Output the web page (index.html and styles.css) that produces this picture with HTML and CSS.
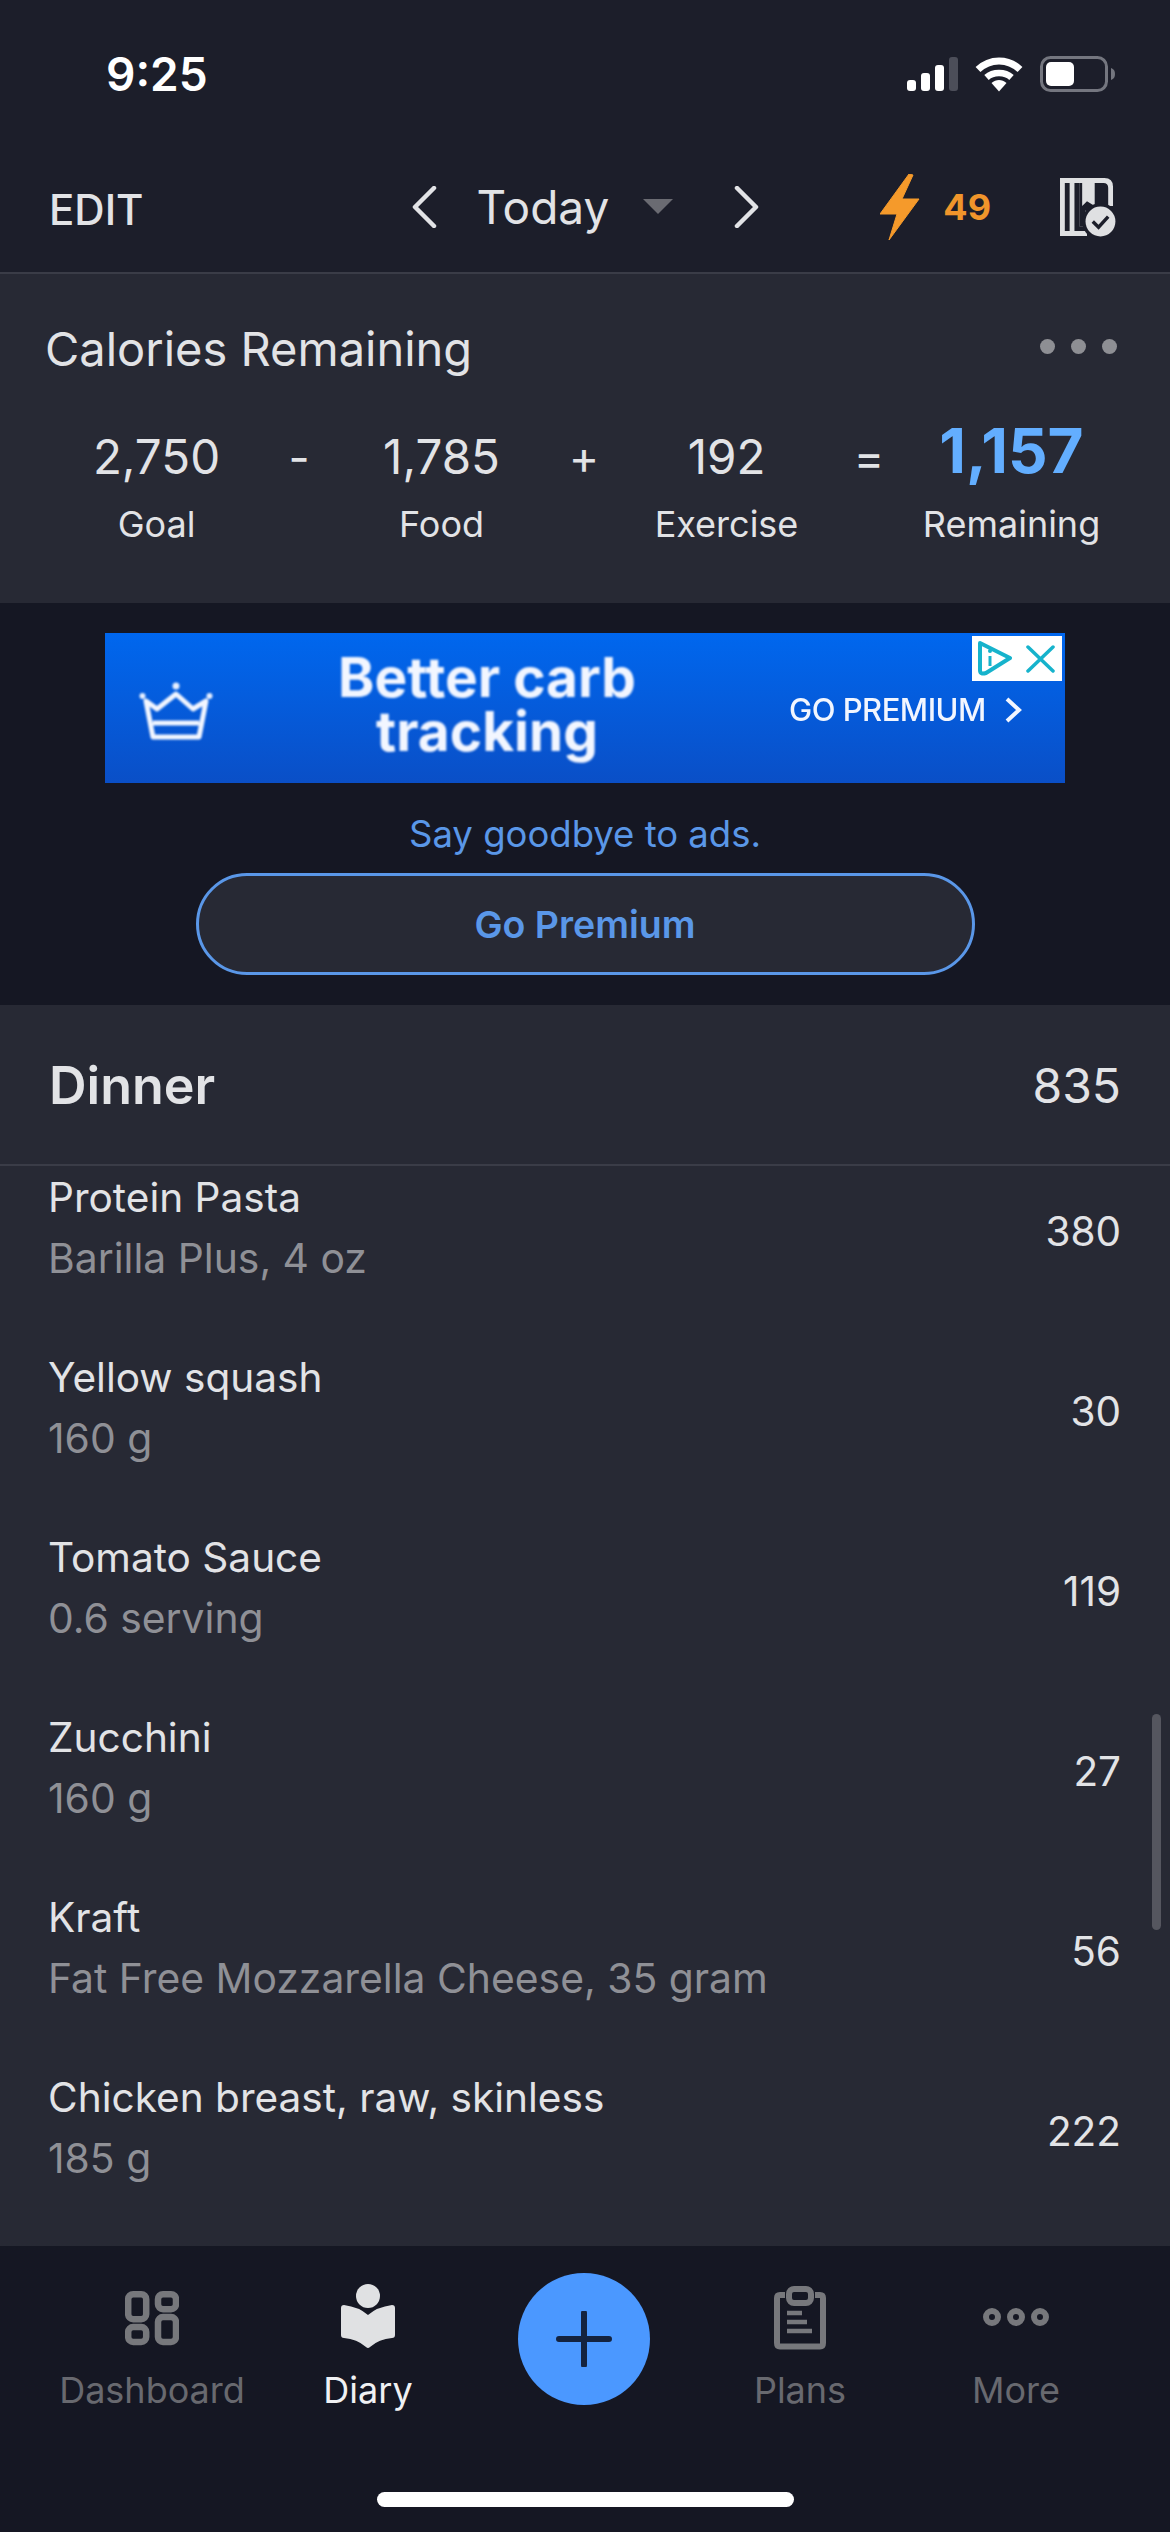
FILE: index.html
```html
<!DOCTYPE html>
<html lang="en">
<head>
<meta charset="utf-8">
<title>Diary</title>
<link rel="stylesheet" href="styles.css">
</head>
<body>
<div class="phone">
  <header class="top">
    <div class="status">
      <span class="time">9:25</span>
      <div class="status-icons">
        <svg class="ic-signal" width="51" height="34" viewBox="0 0 51 34"><rect x="0" y="23" width="9" height="11" rx="3" fill="#fff"/><rect x="14" y="16" width="9" height="18" rx="3" fill="#fff"/><rect x="28" y="8" width="9" height="26" rx="3" fill="#fff"/><rect x="42" y="0" width="9" height="34" rx="3" fill="#4c4e59"/></svg>
        <svg class="ic-wifi" width="48" height="36" viewBox="0 0 48 36"><path d="M3 13.5C15 2 33 2 45 13.5" fill="none" stroke="#fff" stroke-width="7"/><path d="M11.5 21.5C18 15.5 30 15.5 36.5 21.5" fill="none" stroke="#fff" stroke-width="6.500"/><path d="M16.500 27C21 23 27 23 31.500 27L24 35.500Z" fill="#fff"/></svg>
        <svg class="ic-batt" width="76" height="36" viewBox="0 0 76 36"><rect x="1.500" y="1.500" width="65" height="33" rx="9" fill="none" stroke="#74767f" stroke-width="3"/><rect x="6" y="6" width="28" height="24" rx="5" fill="#fff"/><path d="M71 12C74 13 75 15 75 18C75 21 74 23 71 24Z" fill="#74767f"/></svg>
      </div>
    </div>
    <nav class="nav">
      <span class="edit">EDIT</span>
      <div class="date-switch">
        <svg class="chev" width="26" height="42" viewBox="0 0 26 42"><path d="M23 2L4 21L23 40" fill="none" stroke="#e2e3e6" stroke-width="4.500" stroke-linecap="round" stroke-linejoin="round"/></svg>
        <span class="today">Today</span>
        <span class="tri"></span>
        <svg class="chev" width="26" height="42" viewBox="0 0 26 42"><path d="M3 2L22 21L3 40" fill="none" stroke="#e2e3e6" stroke-width="4.500" stroke-linecap="round" stroke-linejoin="round"/></svg>
      </div>
      <div class="streak">
        <svg width="42" height="66" viewBox="0 0 42 66"><path d="M29 0L0 40H17L9 66L39 25H22L33 1Z" fill="#f59a2b" stroke="#f59a2b" stroke-width="1" stroke-linejoin="round"/></svg>
        <span class="streak-n">49</span>
      </div>
      <svg class="book-check" width="58" height="60" viewBox="0 0 58 60"><path d="M0 0H46Q55 0 55 9V29H0Z M0 29H28V60H0Z" fill="#dfe0e2"/><path d="M5 5H10V55H5Z M15 5H20V50H26V55H15Z" fill="#1c1e2a"/><path d="M22 5H23V29L28 24L36 29V5H45Q50 5 50 10V34H26V50H20V5Z" fill="#1c1e2a"/><circle cx="42" cy="45" r="19" fill="#1c1e2a"/><circle cx="42" cy="45" r="15.500" fill="#dfe0e2"/><path d="M34 45L40 51L50 40" fill="none" stroke="#1c1e2a" stroke-width="3.500"/></svg>
    </nav>
  </header>

  <section class="summary">
    <div class="summary-head">
      <h2 class="summary-title">Calories Remaining</h2>
      <div class="dots"><i></i><i></i><i></i></div>
    </div>
    <div class="stats">
      <div class="stat"><span class="val">2,750</span><span class="lab">Goal</span></div>
      <span class="op">-</span>
      <div class="stat"><span class="val">1,785</span><span class="lab">Food</span></div>
      <span class="op">+</span>
      <div class="stat"><span class="val">192</span><span class="lab">Exercise</span></div>
      <span class="op">=</span>
      <div class="stat"><span class="val val-rem">1,157</span><span class="lab">Remaining</span></div>
    </div>
  </section>

  <section class="promo">
    <div class="ad">
      <svg class="crown" width="74" height="58" viewBox="0 0 74 58"><circle cx="37" cy="4" r="3.500" fill="#e8f0ff"/><circle cx="3.500" cy="14" r="3" fill="#e8f0ff"/><circle cx="70.500" cy="14" r="3" fill="#e8f0ff"/><path d="M7 19L18 27L37 12L54 27L67 19L60 55H14Z" fill="none" stroke="#f2f6ff" stroke-width="5" stroke-linejoin="round"/><path d="M14 41H60" stroke="#f2f6ff" stroke-width="5"/></svg>
      <div class="ad-head">Better carb<br>tracking</div>
      <div class="ad-cta"><span>GO PREMIUM</span><svg width="18" height="26" viewBox="0 0 18 26"><path d="M3 2L15 13L3 24" fill="none" stroke="#f2f6ff" stroke-width="4"/></svg></div>
      <div class="ad-badge">
        <svg width="36" height="35" viewBox="0 0 36 35"><path d="M3 2L33 17L9 32Q3 34 3 29Z" fill="none" stroke="#16b3cc" stroke-width="4" stroke-linejoin="round"/><path d="M13 15V25" stroke="#16b3cc" stroke-width="3"/><circle cx="13" cy="10" r="2" fill="#16b3cc"/></svg>
        <svg width="29" height="28" viewBox="0 0 29 28"><path d="M2 2L27 26M27 2L2 26" fill="none" stroke="#16b3cc" stroke-width="3.500" stroke-linecap="round"/></svg>
      </div>
    </div>
    <p class="goodbye">Say goodbye to ads.</p>
    <button class="premium">Go Premium</button>
  </section>

  <section class="meal">
    <div class="meal-head"><h2 class="meal-name">Dinner</h2><span class="meal-cal">835</span></div>
    <div class="list">
      <div class="row"><div class="row-text"><span class="food">Protein Pasta</span><span class="serv">Barilla Plus, 4 oz</span></div><span class="cal">380</span></div>
      <div class="row"><div class="row-text"><span class="food">Yellow squash</span><span class="serv">160 g</span></div><span class="cal">30</span></div>
      <div class="row"><div class="row-text"><span class="food">Tomato Sauce</span><span class="serv">0.6 serving</span></div><span class="cal">119</span></div>
      <div class="row"><div class="row-text"><span class="food">Zucchini</span><span class="serv">160 g</span></div><span class="cal">27</span></div>
      <div class="row"><div class="row-text"><span class="food">Kraft</span><span class="serv">Fat Free Mozzarella Cheese, 35 gram</span></div><span class="cal">56</span></div>
      <div class="row"><div class="row-text"><span class="food">Chicken breast, raw, skinless</span><span class="serv">185 g</span></div><span class="cal">222</span></div>
    </div>
    <div class="scrollbar"></div>
  </section>

  <footer class="tabs">
    <div class="tab">
      <svg class="tab-ic" width="54" height="66" viewBox="0 -7 54 66"><g fill="none" stroke="#77787c" stroke-width="6.500"><rect x="3.200" y="3.200" width="18" height="25" rx="5"/><rect x="33" y="3.200" width="18" height="15" rx="5"/><rect x="3.200" y="36" width="18" height="15" rx="5"/><rect x="33" y="26" width="18" height="25" rx="5"/></g></svg>
      <span class="tab-lab">Dashboard</span>
    </div>
    <div class="tab tab-on">
      <svg class="tab-ic" width="54" height="66" viewBox="0 0 54 66"><circle cx="27" cy="12" r="12" fill="#e0e1e3"/><path d="M3 21Q18 23 27 31Q36 23 51 21Q54 21 54 24V51Q54 54 51 54Q38 55 29 63Q27 65 25 63Q16 55 3 54Q0 54 0 51V24Q0 21 3 21Z" fill="#e0e1e3"/></svg>
      <span class="tab-lab">Diary</span>
    </div>
    <div class="tab tab-add">
      <div class="add"><svg width="56" height="56" viewBox="0 0 56 56"><path d="M28 2V54M3 28H53" stroke="#14233f" stroke-width="6" stroke-linecap="round"/></svg></div>
    </div>
    <div class="tab">
      <svg class="tab-ic" width="52" height="66" viewBox="0 -2 52 66"><path d="M11 9H6Q3 9 3 12V57Q3 60.500 6 60.500H46Q49 60.500 49 57V12Q49 9 46 9H41" fill="none" stroke="#77787c" stroke-width="6"/><rect x="15" y="3" width="22" height="14" rx="5" fill="none" stroke="#77787c" stroke-width="6"/><path d="M13 27H28M13 36H33M13 45H38" stroke="#77787c" stroke-width="4.500"/></svg>
      <span class="tab-lab">Plans</span>
    </div>
    <div class="tab">
      <svg class="tab-ic" width="66" height="66" viewBox="0 -1 66 66"><g fill="none" stroke="#77787c" stroke-width="6"><circle cx="9" cy="32" r="6"/><circle cx="33" cy="32" r="6"/><circle cx="57" cy="32" r="6"/></g></svg>
      <span class="tab-lab">More</span>
    </div>
    <div class="home-bar"></div>
  </footer>
</div>
</body>
</html>
```

FILE: styles.css
```css
* { box-sizing: border-box; }
html, body { margin: 0; padding: 0; background: #151723; }
body { font-family: Inter, "Liberation Sans", sans-serif; }
.phone { width: 1170px; height: 2532px; display: flex; flex-direction: column; overflow: hidden; position: relative; }

.top { background: #1c1e2a; height: 274px; border-bottom: 2px solid #3a3c47; flex: none; }
.status { height: 148px; display: flex; justify-content: space-between; padding: 52px 54px 0 106px; }
.time { color: #fff; font-size: 46px; font-weight: 600; line-height: 45px; }
.status-icons { display: flex; align-items: flex-start; padding-top: 4px; }
.ic-signal { margin-top: 1px; }
.ic-wifi { margin-left: 17px; }
.ic-batt { margin-left: 17px; }

.nav { height: 124px; display: flex; align-items: center; position: relative; padding: 0 54px 7px 49px; color: #e2e3e6; }
.edit { font-size: 42px; font-weight: 500; margin-top: 5px; }
.date-switch { display: flex; align-items: center; margin-left: 267px; }
.today { font-size: 46px; font-weight: 400; margin-left: 40px; }
.tri { width: 0; height: 0; border-left: 15px solid transparent; border-right: 15px solid transparent; border-top: 15px solid #6a6b72; margin-left: 34px; margin-right: 61px; }
.streak { display: flex; align-items: center; margin-left: 120px; }
.streak-n { color: #f0952b; font-size: 36px; font-weight: 700; margin-left: 21px; }
.book-check { margin-left: 69px; }

.summary { background: #272934; height: 329px; flex: none; }
.summary-head { display: flex; justify-content: space-between; align-items: center; padding: 48px 53px 0 45px; }
.summary-title { margin: 0; color: #e2e3e6; font-size: 47px; font-weight: 400; line-height: 54px; }
.dots { display: flex; gap: 16px; margin-top: -6px; }
.dots i { width: 15px; height: 15px; border-radius: 50%; background: #8e8f94; }
.stats { display: flex; padding: 43px 0 0 44px; }
.stat { width: 225px; display: flex; flex-direction: column; align-items: center; }
.op { width: 60px; text-align: center; color: #e2e3e6; font-size: 46px; line-height: 76px; }
.val { color: #e2e3e6; font-size: 47.5px; line-height: 76px; height: 76px; }
.val-rem { color: #63aeff; font-size: 62px; font-weight: 700; line-height: 64px; }
.lab { color: #e2e3e6; font-size: 36px; line-height: 44px; margin-top: 7px; }

.promo { background: #151723; height: 402px; flex: none; display: flex; flex-direction: column; align-items: center; padding-top: 30px; }
.ad { width: 960px; height: 150px; background: linear-gradient(#0067ee, #0a4fc7); position: relative; display: flex; align-items: center; color: #f2f6ff; flex: none; }
.crown { margin-left: 34px; margin-top: 6px; flex: none; filter: blur(0.8px); }
.ad-head { position: absolute; left: 185px; width: 394px; margin-top: -9px; text-align: center; font-size: 55px; font-weight: 700; line-height: 54px; filter: blur(0.8px); }
.ad-cta { position: absolute; left: 684px; top: 62px; display: flex; align-items: center; gap: 18px; font-size: 31px; font-weight: 500; letter-spacing: -0.5px; line-height: 30px; filter: blur(0.6px); }
.ad-badge { position: absolute; right: 3px; top: 3px; width: 90px; height: 45px; background: #fff; display: flex; align-items: center; padding-left: 5px; gap: 13px; }
.goodbye { margin: 31px 0 0; color: #5a97e8; font-size: 36.5px; line-height: 40px; }
.premium { margin-top: 19px; width: 779px; height: 102px; border-radius: 51px; border: 3px solid #5a97e8; background: #272934; color: #5a97e8; font: 600 37.5px Inter, "Liberation Sans", sans-serif; }

.meal { flex: 1; background: #272934; min-height: 0; display: flex; flex-direction: column; position: relative; }
.meal-head { height: 161px; border-bottom: 2px solid #3a3c47; display: flex; justify-content: space-between; align-items: center; padding: 2px 49px 0; color: #e2e3e6; flex: none; position: relative; z-index: 1; background: #272934; }
.meal-name { margin: 0; font-size: 52px; font-weight: 600; }
.meal-cal { font-size: 48px; }
.list { flex: 1; min-height: 0; }
.row { height: 180px; display: flex; justify-content: space-between; align-items: center; padding: 0 49px 0 48px; }
.row:first-child { margin-top: -25px; }
.row-text { display: flex; flex-direction: column; margin-top: -6px; }
.food { color: #e2e3e6; font-size: 40.6px; line-height: 60px; }
.serv { color: #8f9096; font-size: 40.85px; line-height: 60px; }
.cal { color: #e2e3e6; font-size: 40.5px; }
.scrollbar { position: absolute; right: 9px; top: 709px; width: 9px; height: 216px; border-radius: 5px; background: #55565f; }

.tabs { background: #151723; height: 286px; flex: none; display: flex; padding: 0 46px 0 44px; position: relative; }
.tab { width: 216px; height: 186px; display: flex; flex-direction: column; align-items: center; padding-top: 38px; color: #68696f; }
.tab-on { color: #f0f1f3; }
.tab-ic { flex: none; margin-bottom: 19px; }
.tab-lab { font-size: 36px; line-height: 42px; }
.tab-add { padding-top: 27px; }
.add { width: 132px; height: 132px; border-radius: 50%; background: #4b98ff; display: flex; align-items: center; justify-content: center; }
.home-bar { position: absolute; left: 377px; top: 246px; width: 417px; height: 15px; border-radius: 8px; background: #fff; }
```
